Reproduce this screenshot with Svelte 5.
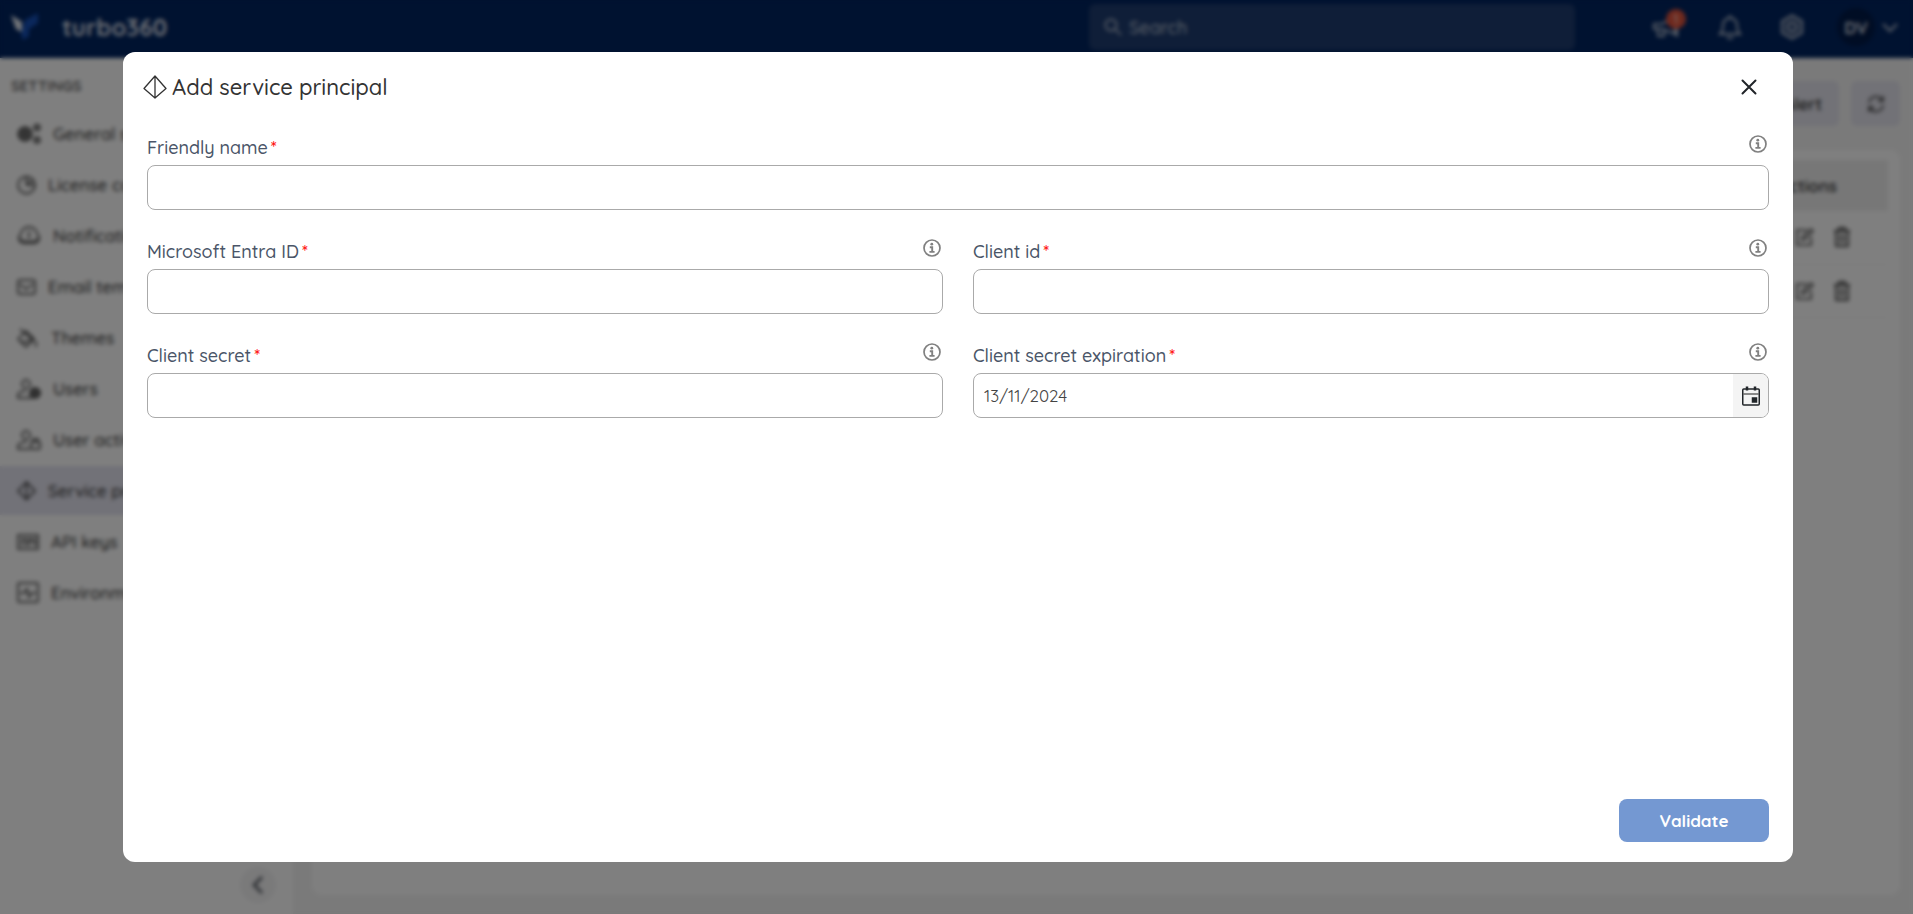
<script>
  const menu = [
    { label: 'General settings', icon: 'gears', w: 24 },
    { label: 'License consumption', icon: 'pie', w: 19 },
    { label: 'Notification channels', icon: 'cloud', w: 24 },
    { label: 'Email templates', icon: 'mail', w: 19 },
    { label: 'Themes', icon: 'paint', w: 22 },
    { label: 'Users', icon: 'user', w: 24 },
    { label: 'User activities', icon: 'userbox', w: 24 },
    { label: 'Service principals', icon: 'prism', w: 19, active: true },
    { label: 'API keys', icon: 'api', w: 22 },
    { label: 'Environment', icon: 'env', w: 22 }
  ];

  let name = $state('');
  let tenant = $state('');
  let client = $state('');
  let secret = $state('');
  let expires = $state('13/11/2024');
</script>

{#snippet info(label)}
  <button type="button" class="info" aria-label={label}>
    <svg width="18" height="18" viewBox="0 0 18 18">
      <circle cx="9" cy="9" r="8" fill="none" stroke="#808080" stroke-width="1.7" />
      <circle cx="8.8" cy="5.2" r="1.4" fill="#808080" />
      <path d="M6.800 8.200h2.400v4.600M6.400 12.900h5.200" fill="none" stroke="#808080" stroke-width="1.9" />
    </svg>
  </button>
{/snippet}

<div class="page" inert>
  <header class="top">
    <svg class="logo" width="30" height="30" viewBox="0 0 30 30">
      <path d="M1 3l11 7v10L6 17z" fill="#e8edf5" />
      <path d="M28 1v10l-9 6v7l-6 4-2-6 4-14z" fill="#1650b8" />
    </svg>
    <span class="brand">turbo360</span>
    <div class="search">
      <svg width="18" height="18" viewBox="0 0 18 18" fill="none" stroke="#b8c2d2" stroke-width="1.7"><circle cx="7" cy="7" r="5.6" /><path d="M11 11l6 6" /></svg>
      <input type="search" placeholder="Search" aria-label="Search" />
    </div>
    <nav class="tools">
      <button class="mega" aria-label="Announcements">
        <svg width="30" height="26" viewBox="0 0 30 26" fill="none" stroke="#b8c2d2" stroke-width="2"><path d="M3 10h8l13-7v17l-13-5H3zM7 15v7h6v-6M26 14v9" /></svg>
        <span class="badge">1</span>
      </button>
      <button aria-label="Notifications">
        <svg width="24" height="26" viewBox="0 0 24 26" fill="none" stroke="#b8c2d2" stroke-width="2"><path d="M12 1v2M2 20c2-2 3-4 3-9a7 7 0 0 1 14 0c0 5 1 7 3 9zM9 23q3 3 6 0" /></svg>
      </button>
      <button aria-label="Settings">
        <svg width="26" height="26" viewBox="0 0 26 26" fill="none" stroke="#b8c2d2" stroke-width="2"><path d="M13 1.500l10 5.500v12l-10 5.500L3 19V7z" fill="#8792a8" fill-opacity=".35" /><circle cx="13" cy="13" r="4.500" /></svg>
      </button>
      <button class="account" aria-label="Account">
        <span class="avatar">DV</span>
        <svg width="16" height="11" viewBox="0 0 16 11" fill="none" stroke="#b8c2d2" stroke-width="2.200"><path d="M1 2l7 7 7-7" /></svg>
      </button>
    </nav>
  </header>
  <div class="below">
    <aside>
      <h2>SETTINGS</h2>
      <ul>
        {#each menu as m}
          <li>
            <a href="#{m.icon}" class:active={m.active}>
              <svg width={m.w} height="22" viewBox="0 0 {m.w} 22" fill="none" stroke="#333" stroke-width="1.5">
                {#if m.icon === 'gears'}
                  <circle cx="8" cy="11" r="6.5" fill="#999" stroke-width="2" /><circle cx="8" cy="11" r="2.5" /><circle cx="20" cy="4.5" r="2.5" stroke-width="2" /><circle cx="20" cy="17" r="2.5" stroke-width="2" />
                {:else if m.icon === 'pie'}
                  <circle cx="9.5" cy="11" r="8.500" /><path d="M9.500 11V3M9.500 11l6-5M9.500 11h8" />
                {:else if m.icon === 'cloud'}
                  <path d="M6 18a5 5 0 0 1-2-9 8 7 0 0 1 16 0 5 5 0 0 1-2 9zM12 6v8M3 14q9 6 18 0" />
                {:else if m.icon === 'mail'}
                  <rect x="1" y="4" width="17" height="14" rx="2" /><path d="M3 8l6 5 7-5" />
                {:else if m.icon === 'paint'}
                  <path d="M3 2l14 12M9 4l8 8-8 8-8-8zM3 15l12-1M19 14v6" />
                {:else if m.icon === 'user'}
                  <circle cx="9" cy="6" r="4" /><path d="M15 20H1v-3q1-4 8-4" /><circle cx="18" cy="15" r="5" fill="#666" />
                {:else if m.icon === 'userbox'}
                  <circle cx="9" cy="6" r="4" /><path d="M13 20H1v-3q1-4 9-4" /><rect x="14" y="13" width="9" height="7" rx="1" /><path d="M16 12v-2h5v2" />
                {:else if m.icon === 'prism'}
                  <path d="M9.500 2l8.500 9-8.500 8.500-8.500-8.500zM9.500 2v17" />
                {:else if m.icon === 'api'}
                  <rect x="1" y="4" width="20" height="14" /><path d="M5 15V8h4v7M12 15V8h3v4M18 7v8" />
                {:else}
                  <rect x="1" y="1" width="20" height="19" rx="1" /><path d="M3 11h4l3-4 2 8 3-4h4" />
                {/if}
              </svg>
              <span>{m.label}</span>
            </a>
          </li>
        {/each}
      </ul>
      <button class="collapse" aria-label="Collapse menu">
        <svg width="12" height="20" viewBox="0 0 12 20" fill="none" stroke="#4a5058" stroke-width="2.500"><path d="M10 2l-8 8 8 8" /></svg>
      </button>
    </aside>
    <main>
      <div class="actions">
        <button>Alert</button>
        <button aria-label="Refresh" class="refresh">
          <svg width="18" height="18" viewBox="0 0 18 18" fill="none" stroke="#333" stroke-width="1.500"><path d="M2 8a7 7 0 0 1 13-3M16 1v5h-5M16 10a7 7 0 0 1-13 3M2 17v-5h5" /></svg>
        </button>
      </div>
      <section class="card">
        <table>
          <thead><tr><th>Actions</th></tr></thead>
          <tbody>
            {#each [1, 2] as n}
              <tr>
                <td>
                  <div class="rowtools">
                    <button aria-label="Edit {n}"><svg width="20" height="20" viewBox="0 0 20 20" fill="none" stroke="#444" stroke-width="1.600"><path d="M12 3H2v15h14v-8M7 13l1-4 8-7 2 2-8 8z" /></svg></button>
                    <button aria-label="Delete {n}"><svg width="18" height="20" viewBox="0 0 18 20" fill="none" stroke="#444" stroke-width="1.800"><path d="M1 4h16M6 4V1h6v3M3 4v15h12V4M7 7v9M11 7v9" /></svg></button>
                  </div>
                </td>
              </tr>
            {/each}
          </tbody>
        </table>
      </section>
    </main>
  </div>
</div>

<div class="overlay">
  <div class="dialog" role="dialog" aria-modal="true" aria-labelledby="title">
    <div class="head">
      <svg width="24" height="24" viewBox="0 0 24 24" fill="none" stroke="#333" stroke-width="1.300" stroke-linejoin="round"><path d="M12 1l11 12.500L12 23 1 13.500zM12 1v22" /></svg>
      <h1 id="title">Add service principal</h1>
      <button type="button" class="close" aria-label="Close">
        <svg width="16" height="16" viewBox="0 0 16 16" stroke="#212529" stroke-width="2" stroke-linecap="round"><path d="M1.500 1.500l13 13M14.500 1.500l-13 13" /></svg>
      </button>
    </div>
    <form>
      <div class="fields">
        <div class="field wide">
          <div class="cap"><label for="name">Friendly name<i>*</i></label>{@render info('About friendly name')}</div>
          <input id="name" type="text" bind:value={name} />
        </div>
        <div class="field">
          <div class="cap"><label for="tenant">Microsoft Entra ID<i>*</i></label>{@render info('About Microsoft Entra ID')}</div>
          <input id="tenant" type="text" bind:value={tenant} />
        </div>
        <div class="field">
          <div class="cap"><label for="client">Client id<i>*</i></label>{@render info('About client id')}</div>
          <input id="client" type="text" bind:value={client} />
        </div>
        <div class="field">
          <div class="cap"><label for="secret">Client secret<i>*</i></label>{@render info('About client secret')}</div>
          <input id="secret" type="password" bind:value={secret} />
        </div>
        <div class="field">
          <div class="cap"><label for="expires">Client secret expiration<i>*</i></label>{@render info('About client secret expiration')}</div>
          <div class="date">
            <input id="expires" type="text" bind:value={expires} />
            <button type="button" aria-label="Open calendar">
              <svg width="20" height="20" viewBox="0 0 20 20" fill="none" stroke="#212529" stroke-width="1.500"><rect x="1.750" y="3" width="16.500" height="16" rx="1" /><path d="M2 8h16" stroke="#666" /><path d="M6 .5v4M14 .5v4" stroke-width="2.500" /><rect x="11.500" y="12" width="4" height="4" fill="#212529" /></svg>
            </button>
          </div>
        </div>
      </div>
      <div class="foot"><button type="button" class="validate">Validate</button></div>
    </form>
  </div>
</div>

<style>
  :global(body) { margin: 0; overflow: hidden; }
  * { box-sizing: border-box; }
  .page, .overlay { font-family: Quicksand, "Open Sans", sans-serif; }
  button { font: inherit; border: 0; background: none; padding: 0; display: flex; align-items: center; justify-content: center; color: inherit; }
  input { font: inherit; }
  .page { height: 100vh; display: flex; flex-direction: column; color: #333; font-size: 17px; }
  .top { height: 58px; flex: none; display: flex; align-items: center; background: #002460; padding: 0 15px 4px 10px; color: #d5dbe6; }
  .brand { font-size: 24px; font-weight: 700; margin-left: 22px; flex: 1; }
  .search { width: 486px; height: 46px; border-radius: 6px; background: #1e3c70; display: flex; align-items: center; padding: 0 15px; gap: 5px; margin-right: 76px; }
  .search input { background: none; border: 0; outline: 0; flex: 1; color: #b8c2d2; font-size: 18px; font-weight: 500; }
  .search input::placeholder { color: #b8c2d2; opacity: 1; }
  .tools { display: flex; align-items: center; gap: 37px; }
  .mega { position: relative; }
  .badge { position: absolute; left: 15px; top: -5px; width: 20px; height: 20px; border-radius: 50%; background: #e0533c; color: #fff; font-size: 13px; line-height: 20px; }
  .account { gap: 7px; margin-left: -5px; }
  .avatar { width: 38px; height: 38px; border-radius: 50%; background: #001a48; font-weight: 700; display: grid; place-items: center; }
  .below { flex: 1; display: flex; min-height: 0; }
  aside { width: 293px; flex: none; background: #fff; display: flex; flex-direction: column; padding-bottom: 11px; }
  h2 { font-size: 15px; line-height: 20px; font-weight: 600; margin: 18px 0 13px 11px; color: #555; }
  ul { list-style: none; margin: 0; padding: 0; display: flex; flex-direction: column; gap: 2px; flex: 1; }
  li a { display: flex; align-items: center; gap: 12px; height: 49px; padding-left: 17px; color: #333; text-decoration: none; white-space: nowrap; font-weight: 500; }
  a.active { background: #e4e4f0; }
  .collapse { width: 36px; height: 36px; border-radius: 50%; background: #f4f4f5; margin-left: 240px; }
  main { flex: 1; background: #f5f5f5; display: flex; flex-direction: column; padding: 23px 13px 19px 19px; }
  .actions { display: flex; justify-content: flex-end; gap: 12px; margin-bottom: 24px; }
  .actions button { height: 45px; border-radius: 6px; background: #e4e4ee; padding: 0 17px; font-weight: 600; }
  .actions .refresh { width: 49px; padding: 0; }
  .card { flex: 1; background: #fff; border-radius: 10px; padding: 10px 12px; }
  table { width: 100%; border-collapse: collapse; }
  th { height: 51px; background: #efefef; text-align: right; padding: 0 51px 0 0; font-weight: 600; }
  td { height: 53px; padding: 0 37px 0 0; border-bottom: 1px solid #f5f5f5; }
  .rowtools { display: flex; justify-content: flex-end; gap: 18px; }

  .overlay { position: fixed; inset: 0; background: rgba(0, 0, 0, .5); backdrop-filter: blur(2px); padding: 52px 120px 52px 123px; display: flex; }
  .dialog { flex: 1; background: #fff; border-radius: 12px; display: flex; flex-direction: column; }
  .head { height: 70px; display: flex; align-items: center; gap: 5px; padding: 0 26px 0 20px; }
  h1 { flex: 1; margin: 0; font-size: 22px; font-weight: 500; color: #333; }
  .close { width: 36px; height: 36px; }
  form { flex: 1; display: flex; flex-direction: column; justify-content: space-between; padding: 13px 24px 20px; }
  .fields { display: grid; grid-template-columns: 1fr 1fr; gap: 29px 30px; }
  .wide { grid-column: 1 / -1; }
  .cap { display: flex; justify-content: space-between; align-items: flex-start; height: 30px; padding-right: 2px; }
  label { font-size: 18px; line-height: 26px; font-weight: 500; color: #4a5568; }
  label i { font-style: normal; color: #f00; margin-left: 3px; }
  .field > input, .date { width: 100%; height: 45px; border: 1px solid #aaa; border-radius: 8px; background: #fff; display: block; }
  .field input { padding: 0 10px; font-size: 17px; color: #444; outline: 0; }
  .date { display: flex; overflow: hidden; }
  .date input { flex: 1; min-width: 0; border: 0; background: none; }
  .date button { width: 35px; background: #f4f4f4; }
  .foot { display: flex; justify-content: flex-end; }
  .validate { width: 150px; height: 43px; border-radius: 8px; background: #7498d2; color: #fff; font-size: 17px; font-weight: 700; }
</style>
